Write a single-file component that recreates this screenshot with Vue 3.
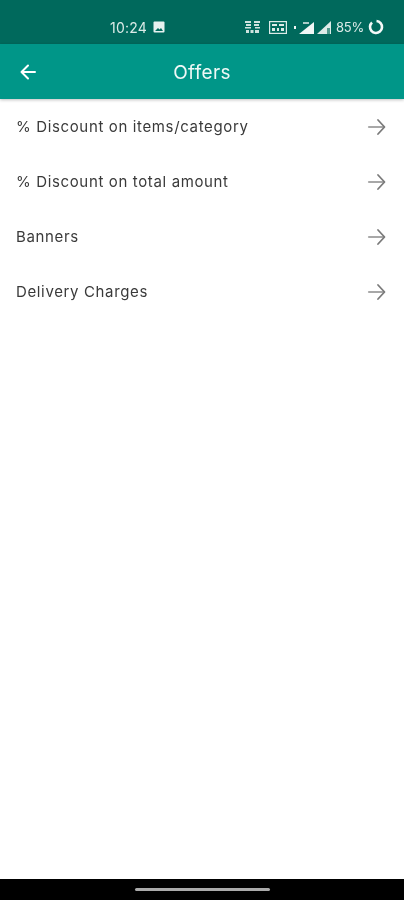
<script setup>
const items = ['% Discount on items/category', '% Discount on total amount', 'Banners', 'Delivery Charges']
</script>

<template>
  <div class="screen">
    <div class="status">
      <span class="time">10:24</span>
      <svg class="pic" width="12" height="12" viewBox="0 0 12 12"><rect x="0.5" y="0.5" width="11" height="11" rx="1" fill="#e6f1ef"/><path d="M2 10l3-3 1.500 1.500L8 7l2 3z" fill="#00695c"/></svg>
      <span class="spacer"></span>
      <svg class="ic" width="17" height="14" viewBox="0 0 17 14" fill="#cfe3df"><rect x="1" y="1" width="6" height="2"/><rect x="2" y="4" width="5" height="2"/><rect x="1" y="7" width="6" height="1.500"/><rect x="10" y="1" width="6" height="2"/><rect x="10" y="4" width="5" height="2"/><rect x="11" y="7" width="5" height="1.500"/><rect x="2" y="10" width="3" height="3"/><rect x="6.500" y="10" width="3" height="3"/><rect x="11" y="10" width="4" height="3"/></svg>
      <svg class="ic2" width="18" height="13" viewBox="0 0 18 13"><rect x="0.600" y="0.600" width="16.800" height="11.800" fill="none" stroke="#dcebe8" stroke-width="1.200"/><path d="M3 3h5v2H3zM10 3h5v2h-5zM3 7h3v3H3zM8 7h2v3H8zM12 7h3v3h-3z" fill="#dcebe8"/></svg>
      <svg class="ic3" width="21" height="13" viewBox="0 0 21 13" fill="#f1f7f6"><rect x="0" y="5" width="2" height="3"/><path d="M5 13L20 1v12z"/><rect x="9" y="1" width="6" height="2" opacity=".7"/></svg>
      <svg class="ic4" width="15" height="13" viewBox="0 0 15 13"><path d="M0 13L14 0v13z" fill="#dcebe8"/><path d="M10 7h3v6h-3z" fill="#4f9a8d"/></svg>
      <span class="pct">85%</span>
      <svg class="ring" width="16" height="16" viewBox="0 0 16 16"><circle cx="8" cy="8" r="6" fill="none" stroke="#f4f9f8" stroke-width="2.600" stroke-dasharray="32 37.700" transform="rotate(-85 8 8)"/></svg>
    </div>
    <header class="bar">
      <svg class="back" width="20" height="20" viewBox="0 0 20 20" fill="none" stroke="#fff" stroke-width="2" stroke-linecap="round" stroke-linejoin="round"><path d="M17 10H3.500M10 3.500L3.500 10l6.500 6.500"/></svg>
      <h1 class="title">Offers</h1>
    </header>
    <main class="list">
      <div v-for="item in items" :key="item" class="row">
        <span class="label">{{ item }}</span>
        <svg class="arrow" width="20" height="20" viewBox="0 0 20 20" fill="none" stroke-linejoin="round" stroke-linecap="round"><path d="M2 10h14" stroke="#a8a8a8" stroke-width="2.200"/><path d="M11 3l6.500 7-6.500 7" stroke="#7a7a7a" stroke-width="1.800"/></svg>
      </div>
    </main>
    <footer class="nav"><span class="pill"></span></footer>
  </div>
</template>

<style scoped>
.screen {
  width: 404px;
  height: 900px;
  display: flex;
  flex-direction: column;
  background: #fff;
  font-family: Inter, "Open Sans", sans-serif;
  overflow: hidden;
}
.status {
  height: 44px;
  flex: none;
  background: #00695c;
  display: flex;
  align-items: center;
  padding: 10px 20px 0 110px;
  box-sizing: border-box;
  color: #dcebe8;
  font-size: 14px;
  filter: blur(0.4px);
}
.time { letter-spacing: 0.2px; }
.pic { margin-left: 6px; }
.spacer { flex: 1; }
.ic2 { margin-left: 8px; }
.ic3 { margin-left: 7px; }
.ic4 { margin-left: 2px; }
.pct { margin-left: 4px; font-size: 13px; letter-spacing: -0.2px; }
.ring { margin-left: 4px; }
.bar {
  height: 55px;
  flex: none;
  background: #009688;
  display: flex;
  align-items: center;
  justify-content: center;
  position: relative;
  box-shadow: 0 1px 3px rgba(0, 0, 0, 0.25);
  z-index: 1;
}
.back {
  position: absolute;
  left: 18px;
  top: 18px;
  filter: blur(0.4px);
}
.title {
  margin: 2px 0 0;
  color: #eef8f6;
  font-size: 19px;
  font-weight: 400;
  letter-spacing: 0.35px;
  filter: blur(0.4px);
}
.list {
  flex: 1;
}
.row {
  height: 55px;
  display: flex;
  align-items: center;
  justify-content: space-between;
  padding: 0 17px 0 16px;
  filter: blur(0.4px);
}
.label {
  color: #3a3a3a;
  font-size: 15px;
  letter-spacing: 0.64px;
}
.nav {
  height: 21px;
  flex: none;
  background: #000;
  display: flex;
  justify-content: center;
  padding-top: 9px;
  box-sizing: border-box;
}
.pill {
  width: 135px;
  height: 3px;
  border-radius: 2px;
  background: #aaa;
}
</style>
